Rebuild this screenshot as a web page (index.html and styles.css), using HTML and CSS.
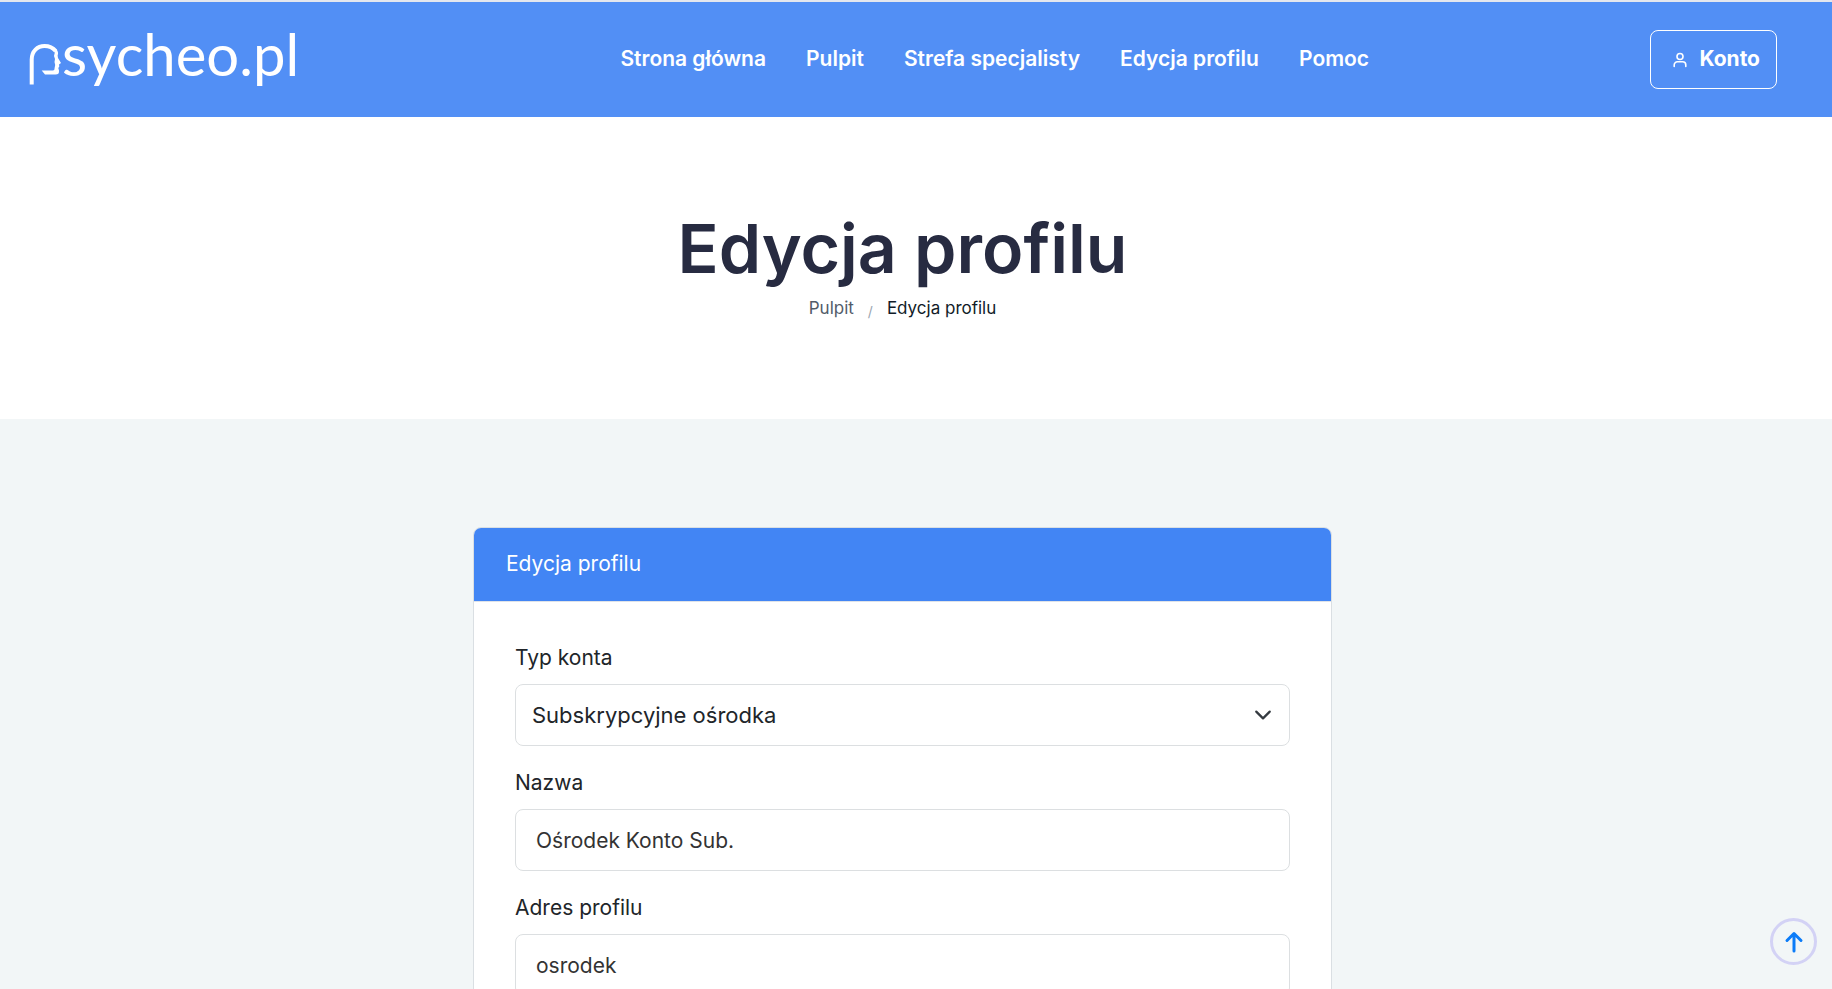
FILE: index.html
```html
<!DOCTYPE html>
<html lang="pl">
<head>
<meta charset="utf-8">
<meta name="viewport" content="width=device-width, initial-scale=1">
<title>Edycja profilu - psycheo.pl</title>
<link rel="stylesheet" href="styles.css">
</head>
<body>
<header class="topbar">
  <a class="logo" href="#" aria-label="psycheo.pl">
    <svg class="logo-mark" viewBox="0 0 34 54" aria-hidden="true">
      <path d="M3.700 51.500V26.500C3.700 18 9.500 13 16.500 13c4.500 0 8.500 1.700 11.200 5" />
      <path class="logo-face" d="M26 15.500l3 1.500c1.200 2 1.400 3.500.6 5.500l.4 2.500 3 5-2 1.500.3 2-1 1.500.7 2.500c.2 3-.8 4-3.500 4H17l-3.300-4h11c1.600 0 1.800-.8 1.900-2.500l.6-3-.7-3 .5-3-1-3 .7-3z" />
    </svg>
    <span class="logo-text">sycheo.pl</span>
  </a>
  <nav class="menu" aria-label="Menu">
    <a href="#">Strona główna</a>
    <a href="#">Pulpit</a>
    <a href="#">Strefa specjalisty</a>
    <a href="#">Edycja profilu</a>
    <a href="#">Pomoc</a>
  </nav>
  <button class="account" type="button">
    <svg viewBox="0 0 14 16" aria-hidden="true"><circle cx="7" cy="4.500" r="3" /><path d="M1.200 14.500v-1.500a3.200 3.200 0 0 1 3.200-3.200h5.200a3.200 3.200 0 0 1 3.200 3.200v1.500" /></svg>
    <span>Konto</span>
  </button>
</header>
<main class="page">
  <section class="hero">
    <h1>Edycja profilu</h1>
    <nav class="crumbs" aria-label="Okruszki">
      <a href="#">Pulpit</a>
      <span class="slash">/</span>
      <span class="current">Edycja profilu</span>
    </nav>
  </section>
  <section class="content">
    <div class="card">
      <div class="card-head">Edycja profilu</div>
      <form class="card-body">
        <div class="field">
          <label for="type">Typ konta</label>
          <div class="select-wrap">
            <select id="type"><option>Subskrypcyjne ośrodka</option></select>
            <svg class="chevron" viewBox="0 0 16 16" aria-hidden="true"><path d="M2 5l6 6 6-6" /></svg>
          </div>
        </div>
        <div class="field">
          <label for="name">Nazwa</label>
          <input id="name" type="text" value="Ośrodek Konto Sub.">
        </div>
        <div class="field">
          <label for="slug">Adres profilu</label>
          <input id="slug" type="text" value="osrodek">
        </div>
      </form>
    </div>
  </section>
</main>
<button class="to-top" type="button" aria-label="Do góry">
  <svg viewBox="0 0 20 22" aria-hidden="true"><path d="M10 20V2.500M3 9.500l7-7 7 7" /></svg>
</button>
</body>
</html>
```
FILE: styles.css
```css
* { box-sizing: border-box; }
body {
  margin: 0;
  height: 100vh;
  display: flex;
  flex-direction: column;
  font-family: Inter, sans-serif;
  font-size: 21px;
  color: #212529;
  background: #f2f6f7;
}
a { color: inherit; text-decoration: none; }
button, input, select { font: inherit; color: inherit; }
svg { fill: none; stroke: currentColor; stroke-linecap: round; stroke-linejoin: round; }

.topbar {
  flex: none;
  display: grid;
  grid-template-columns: auto 1fr auto;
  align-items: center;
  height: 117px;
  padding: 0 55px 0 28px;
  border-top: 2px solid #e4e7ee;
  background: #528ff5;
  color: #fff;
}
.logo { display: flex; align-items: center; }
.logo-mark { width: 34px; height: 54px; stroke-width: 4; stroke-linecap: butt; }
.logo-face { fill: currentColor; stroke: none; }
.logo-text { padding-bottom: 12px; font: 58px/60px Lato, sans-serif; }
.menu {
  display: flex;
  justify-content: center;
  gap: 40px;
  padding: 0 0 2px 40px;
  font-weight: 600;
}
.account {
  display: flex;
  align-items: center;
  gap: 12px;
  height: 59px;
  padding: 0 16px 0 22px;
  border: 1px solid #fff;
  border-radius: 8px;
  background: none;
  font-weight: 700;
}
.account span { padding-bottom: 2px; }
.account svg { width: 14px; height: 16px; stroke-width: 1.600; }

.page { flex: 1; min-height: 0; overflow-y: auto; scrollbar-width: none; }
.hero {
  display: flex;
  flex-direction: column;
  align-items: center;
  padding: 91px 27px 93px 0;
  background: #fff;
}
h1 { margin: 0; font-size: 68px; line-height: 80px; font-weight: 600; color: #272b41; }
.crumbs { display: flex; gap: 14px; margin-top: 6px; font-size: 17px; line-height: 28px; }
.crumbs a { color: #525c6a; }
.slash { padding-top: 4px; color: #9aa5b1; font-size: 14px; }
.current { color: #111c28; }

.content { padding: 108px 27px 60px 0; }
.card {
  max-width: 859px;
  margin: 0 auto;
  border: 1px solid #dadfe3;
  border-radius: 8px;
  background: #fff;
  overflow: hidden;
}
.card-head {
  padding: 20px 32px 21px;
  line-height: 32px;
  border-bottom: 1px solid #dfe3e8;
  background: #4285f4;
  color: #fff;
}
.card-body { display: flex; flex-direction: column; gap: 23px; padding: 42px 41px; }
.field { display: flex; flex-direction: column; gap: 12px; }
label { line-height: 28px; }
input, select {
  width: 100%;
  height: 62px;
  padding: 0 20px;
  border: 1px solid #dcdfe1;
  border-radius: 8px;
  background: #fff;
}
input { color: #333; }
select { appearance: none; padding: 0 16px; font-size: 22px; }
.select-wrap { position: relative; display: flex; }
.chevron { position: absolute; right: 18px; top: 22px; width: 18px; height: 18px; stroke: #343a40; stroke-width: 2; pointer-events: none; }

.to-top {
  position: fixed;
  right: 15px;
  bottom: 24px;
  display: grid;
  place-items: center;
  width: 47px;
  height: 47px;
  padding: 0;
  border: 3px solid #d3d2f5;
  border-radius: 50%;
  background: none;
  color: #0c7cf8;
}
.to-top svg { width: 20px; height: 22px; stroke-width: 3; }
```
